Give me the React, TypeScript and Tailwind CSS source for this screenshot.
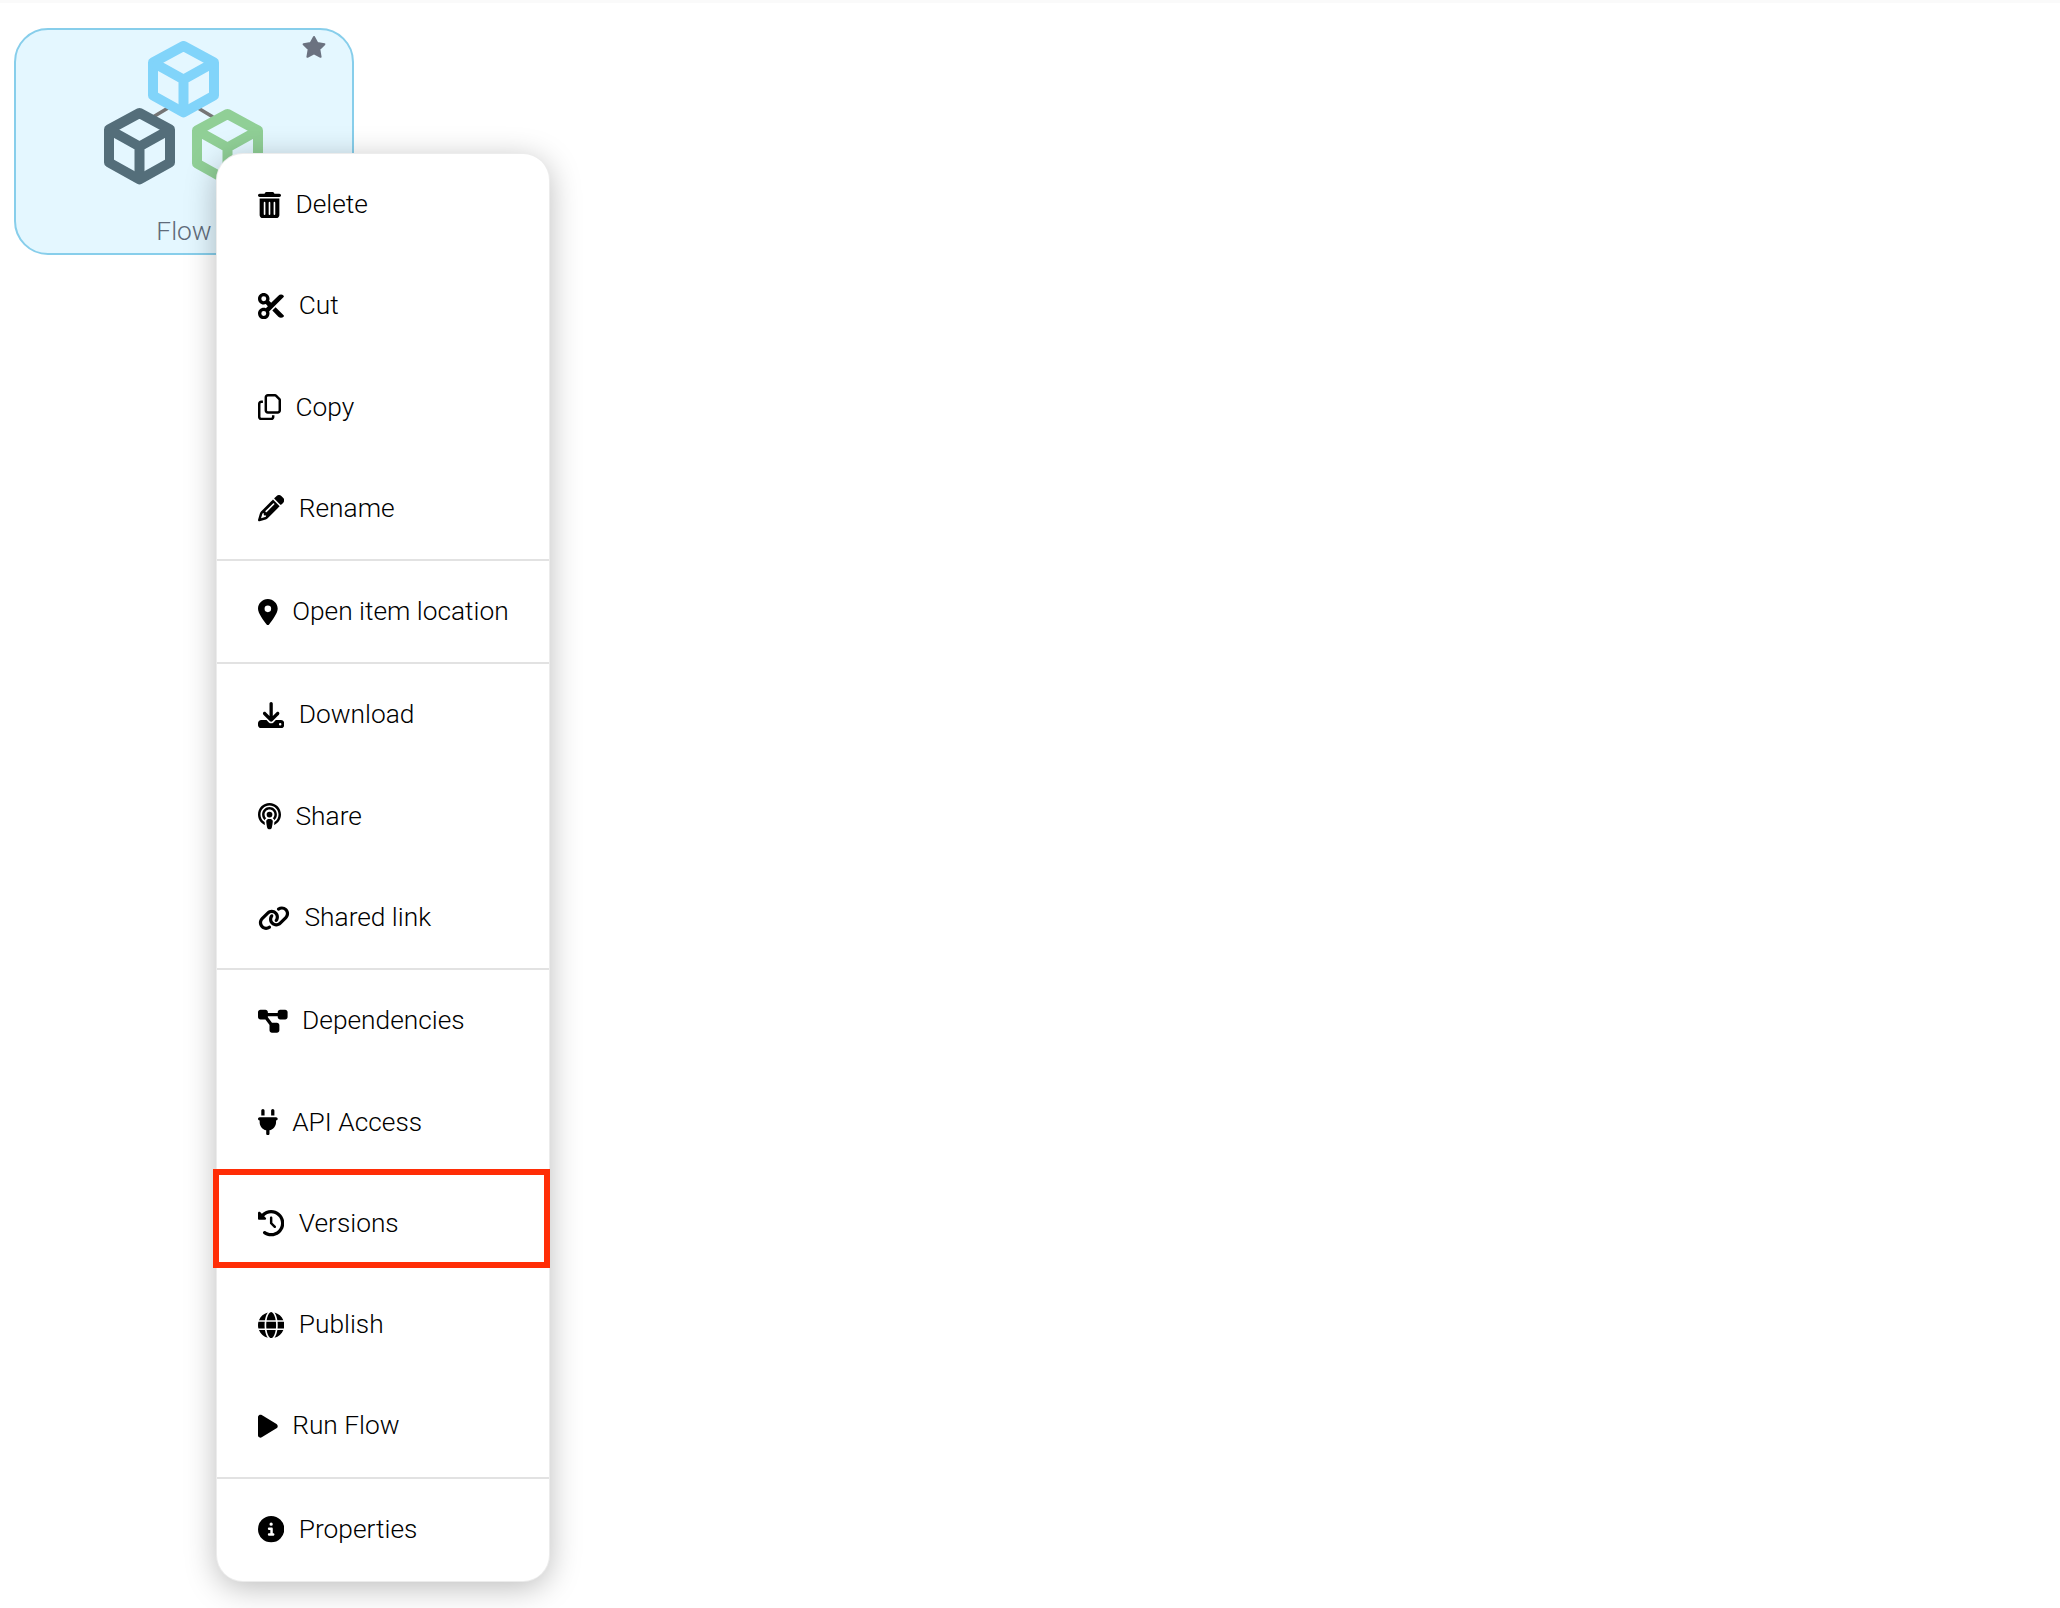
import React from 'react';
import {
    FaTrashCan,
    FaScissors,
    FaRegCopy,
    FaPencil,
    FaLocationDot,
    FaDownload,
    FaPodcast,
    FaLink,
    FaDiagramProject,
    FaPlug,
    FaClockRotateLeft,
    FaGlobe,
    FaPlay,
    FaCircleInfo
} from 'react-icons/fa6';

const Cube = ({ x, y, color }: { x: number; y: number; color: string }) => (
    <g transform={`translate(${x} ${y})`} fill="none" stroke={color} strokeWidth="10" strokeLinejoin="round">
        <path d="M35.5 5 L66 21.5 V54.5 L35.5 71.5 L5 54.5 V21.5 Z" />
        <path d="M5 21.5 L35.5 38.5 L66 21.5 M35.5 38.5 V71.5" />
    </g>
);

const FlowLogo = () => (
    <svg width="159" height="144" viewBox="0 0 159 144" className="block">
        <path d="M49 76 L64 67 M94 67 L109 76" stroke="#757575" strokeWidth="3.5" />
        <Cube x={44} y={0} color="#81d4fa" />
        <Cube x={0} y={67} color="#546e7a" />
        <Cube x={88} y={68} color="#90cf96" />
    </svg>
);

const StarIcon = () => (
    <svg width="24" height="24" viewBox="0 0 24 24" className="absolute top-[5px] right-[26px]">
        <path
            d="M12 2 L15.3 8.1 L22.4 9.2 L17.3 14.2 L18.6 21.8 L12 18.3 L5.4 21.8 L6.7 14.2 L1.6 9.2 L8.7 8.1 Z"
            fill="#6b7280"
            stroke="#6b7280"
            strokeWidth="2"
            strokeLinejoin="round"
        />
    </svg>
);

const Row = ({ icon, label, highlight }: { icon: React.ReactNode; label: string; highlight?: boolean }) => (
    <div className="relative h-[101.3px] flex items-center gap-[14.5px] pl-[41px] text-[26.3px] font-light text-black">
        {icon}
        <span>{label}</span>
        {highlight && <div className="absolute -left-[4px] right-[-1px] -top-[4px] bottom-[6px] border-[6px] border-[#ff2d06]" />}
    </div>
);

const Divider = () => <div className="h-[2px] bg-[#e2e2e2]" />;

export default function App() {
    return (
        <div className="relative w-[2060px] h-[1608px] bg-white overflow-hidden font-['Roboto',sans-serif]">
            <div className="absolute top-0 left-0 right-0 h-[3px] bg-[#fafafa]" />

            {/* Flow card */}
            <div className="relative ml-[14px] mt-[28px] w-[340px] h-[227px] rounded-[34px] border-2 border-[#87ceeb] bg-[#e4f7ff] flex flex-col items-center">
                <StarIcon />
                <div className="mt-[11px] -ml-[1px]">
                    <FlowLogo />
                </div>
                <span className="mt-[33px] text-[26.3px] font-light leading-none text-[#5f6b7a]">Flow</span>
            </div>

            {/* Context menu */}
            <div className="absolute left-[217px] top-[154px] w-[332px] pb-[1px] rounded-[26px] bg-white shadow-[0_0_0_1px_#ececec,0_6px_32px_rgba(0,0,0,0.28)]">
                <Row icon={<FaTrashCan className="h-[26.3px] w-[23px] shrink-0" />} label="Delete" />
                <Row icon={<FaScissors className="h-[26.3px] w-[26.3px] shrink-0" />} label="Cut" />
                <Row icon={<FaRegCopy className="h-[26.3px] w-[23px] shrink-0" />} label="Copy" />
                <Row icon={<FaPencil className="h-[26.3px] w-[26.3px] shrink-0" />} label="Rename" />
                <Divider />
                <Row icon={<FaLocationDot className="h-[26.3px] w-[19.7px] shrink-0" />} label="Open item location" />
                <Divider />
                <Row icon={<FaDownload className="h-[26.3px] w-[26.3px] shrink-0" />} label="Download" />
                <Row icon={<FaPodcast className="h-[26.3px] w-[23px] shrink-0" />} label="Share" />
                <Row icon={<FaLink className="h-[26.3px] w-[32px] shrink-0" />} label="Shared link" />
                <Divider />
                <Row icon={<FaDiagramProject className="h-[26.3px] w-[29.6px] shrink-0" />} label="Dependencies" />
                <Row icon={<FaPlug className="h-[26.3px] w-[19.7px] shrink-0" />} label="API Access" />
                <Row icon={<FaClockRotateLeft className="h-[26.3px] w-[26.3px] shrink-0" />} label="Versions" highlight />
                <Row icon={<FaGlobe className="h-[26.3px] w-[26.3px] shrink-0" />} label="Publish" />
                <Row icon={<FaPlay className="h-[26.3px] w-[19.7px] shrink-0" />} label="Run Flow" />
                <Divider />
                <Row icon={<FaCircleInfo className="h-[26.3px] w-[26.3px] shrink-0" />} label="Properties" />
            </div>
        </div>
    );
}
